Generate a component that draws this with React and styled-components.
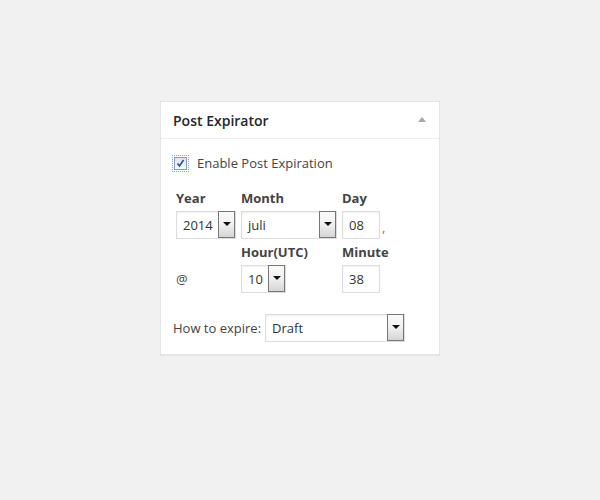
import styled, { createGlobalStyle } from 'styled-components'

const GlobalStyle = createGlobalStyle`
	body {
		margin: 0;
		background: #f1f1f1;
		font-family: "Open Sans", "Liberation Sans", sans-serif;
		color: #444;
	}
`

const Page = styled.div`
	padding: 101px 0 0 160px;
	height: 500px;
	box-sizing: border-box;
`
const Box = styled.div`
	width: 280px;
	box-sizing: border-box;
	background: #fff;
	border: 1px solid #e5e5e5;
	box-shadow: 0 1px 1px rgba(0, 0, 0, 0.04);
`
// HEADER
const Header = styled.div`
	height: 36px;
	display: flex;
	align-items: center;
	justify-content: space-between;
	padding: 0 13px 0 12px;
	border-bottom: 1px solid #eee;
`
const Title = styled.h3`
	margin: 0;
	font-size: 14px;
	font-weight: 600;
	color: #23282d;
`
const Toggle = styled.span`
	width: 0;
	height: 0;
	border-left: 4px solid transparent;
	border-right: 4px solid transparent;
	border-bottom: 5px solid #aaa;
	margin-top: -1px;
`
// BODY
const Body = styled.div`
	padding: 12px;
`
const CheckRow = styled.label`
	display: flex;
	align-items: center;
	height: 24px;
	font-size: 13px;
	color: #444;
`
const CheckBox = styled.span`
	width: 11px;
	height: 11px;
	margin: 0 10px 0 1px;
	border: 1px solid #8e9db2;
	background: linear-gradient(#dfe5ee, #f6f8fb);
	outline: 1px dotted #8aa2c4;
	outline-offset: 1px;
	display: flex;
	align-items: center;
	justify-content: center;
`
const Grid = styled.div`
	display: grid;
	grid-template-columns: 65px 101px auto;
	grid-template-rows: 18px 28px 18px 28px;
	row-gap: 4px;
	margin: 14px 0 0 3px;
`
const Label = styled.div`
	font-size: 13px;
	font-weight: 700;
	color: #444;
	line-height: 18px;
`
const Cell = styled.div`
	display: flex;
	align-items: center;
	font-size: 13px;
	color: #444;
`
const SelectBox = styled.div`
	width: ${(p) => p.$w}px;
	height: 28px;
	box-sizing: border-box;
	border: 1px solid #ddd;
	box-shadow: inset 0 1px 2px rgba(0, 0, 0, 0.07);
	display: flex;
	align-items: stretch;
	font-size: 13px;
	color: #333;
`
const SelectText = styled.span`
	flex: 1;
	display: flex;
	align-items: center;
	padding-left: 6px;
`
const ArrowButton = styled.span`
	width: 15px;
	margin: -1px 0 0;
	border: 1px solid #777;
	background: linear-gradient(#fafafa, #f2f2f2 45%, #d6d6d6);
	display: flex;
	align-items: center;
	justify-content: center;
	&::after {
		content: '';
		border-left: 4px solid transparent;
		border-right: 4px solid transparent;
		border-top: 4px solid #111;
		margin-top: -1px;
	}
`
const Input = styled.div`
	width: 38px;
	height: 28px;
	box-sizing: border-box;
	border: 1px solid #ddd;
	box-shadow: inset 0 1px 2px rgba(0, 0, 0, 0.07);
	padding-left: 6px;
	display: flex;
	align-items: center;
	font-size: 13px;
	color: #333;
`
const Comma = styled.span`
	margin: 4px 0 0 2px;
	color: #777;
`
const ExpireRow = styled.div`
	display: flex;
	align-items: center;
	gap: 4px;
	margin-top: 21px;
	font-size: 13px;
	color: #444;
`

const Select = ({ width, value }) => (
	<SelectBox $w={width}>
		<SelectText>{value}</SelectText>
		<ArrowButton />
	</SelectBox>
)

const App = () => {
	return (
		<Page>
			<GlobalStyle />
			<Box>
				<Header>
					<Title>Post Expirator</Title>
					<Toggle />
				</Header>
				<Body>
					<CheckRow>
						<CheckBox>
							<svg width="9" height="9" viewBox="0 0 9 9">
								<path d="M1.5 4.5 L3.5 7 L7.5 1" fill="none" stroke="#2a4f9c" strokeWidth="1.6" />
							</svg>
						</CheckBox>
						Enable Post Expiration
					</CheckRow>
					<Grid>
						<Label>Year</Label>
						<Label>Month</Label>
						<Label>Day</Label>
						<Cell>
							<Select width={60} value="2014" />
						</Cell>
						<Cell>
							<Select width={96} value="juli" />
						</Cell>
						<Cell>
							<Input>08</Input>
							<Comma>,</Comma>
						</Cell>
						<div />
						<Label>Hour(UTC)</Label>
						<Label>Minute</Label>
						<Cell>@</Cell>
						<Cell>
							<Select width={45} value="10" />
						</Cell>
						<Cell>
							<Input>38</Input>
						</Cell>
					</Grid>
					<ExpireRow>
						How to expire:
						<Select width={140} value="Draft" />
					</ExpireRow>
				</Body>
			</Box>
		</Page>
	)
}

export default App
